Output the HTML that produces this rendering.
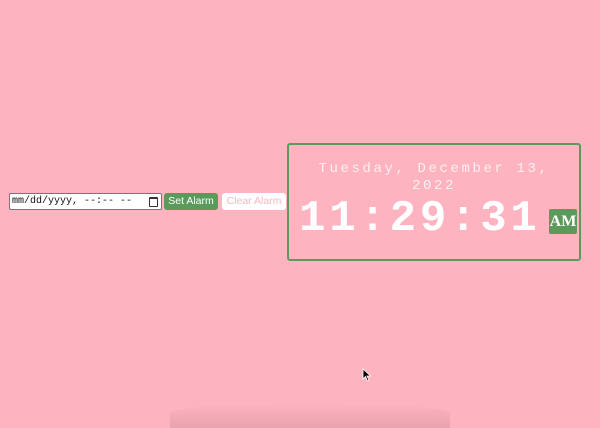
<!DOCTYPE html>
<html><head><style>
html,body{margin:0;padding:0;width:600px;height:428px;background:#feb3c0;overflow:hidden;font-family:"Liberation Sans",sans-serif;position:relative}
.inp{position:absolute;left:9px;top:193px;width:149px;height:15px;border:1px solid #777;border-radius:2px;background:#fff;font:10px "Liberation Mono",monospace;line-height:15px;color:#111;padding-left:2px;box-sizing:content-box}
.cal{position:absolute;right:3px;top:3px;width:7px;height:7px;border:1px solid #333;border-top-width:2px;border-radius:1px}
.btn{position:absolute;top:193px;height:17px;border-radius:3px;font-size:10.5px;line-height:17px;text-align:center}
.set{left:164px;width:54px;background:#5c9a5c;color:#fff}
.clr{left:222px;width:64px;background:#fff;color:#fcb4c0}
.box{position:absolute;left:287px;top:143px;width:290px;height:114px;border:2px solid #5c9a5c;border-radius:3px}
.date{position:absolute;left:0;width:290px;top:16px;text-align:center;font:14px "Liberation Mono",monospace;letter-spacing:2.6px;color:#fdf0f2;line-height:17px}
.time{position:absolute;left:10px;top:49px;font:bold 44px "Liberation Mono",monospace;letter-spacing:3.8px;color:#fff;line-height:50px}
.am{position:absolute;left:260px;top:64px;width:28px;height:25px;background:#5c9a5c;color:#fff;font:bold 16px "Liberation Serif",serif;line-height:25px;text-align:center;border-radius:2px}
.shadow{position:absolute;left:170px;top:404px;width:280px;height:24px;background:linear-gradient(#feb3c0,#e9a2af);border-radius:40% 40% 0 0}
</style></head><body>
<div class="inp">mm/dd/yyyy, --:-- --<span class="cal"></span></div>
<div class="btn set">Set Alarm</div>
<div class="btn clr">Clear Alarm</div>
<div class="box">
<div class="date">Tuesday, December 13,<br>2022</div>
<div class="time">11:29:31</div>
<div class="am">AM</div>
</div>
<div class="shadow"></div>
<svg style="position:absolute;left:362px;top:368px" width="10" height="14" viewBox="0 0 10 14"><path d="M1 1 L1 11 L3.5 8.5 L5.5 13 L7 12.3 L5 8 L8.5 8 Z" fill="#000" stroke="#fff" stroke-width="0.8"/></svg>
</body></html>
